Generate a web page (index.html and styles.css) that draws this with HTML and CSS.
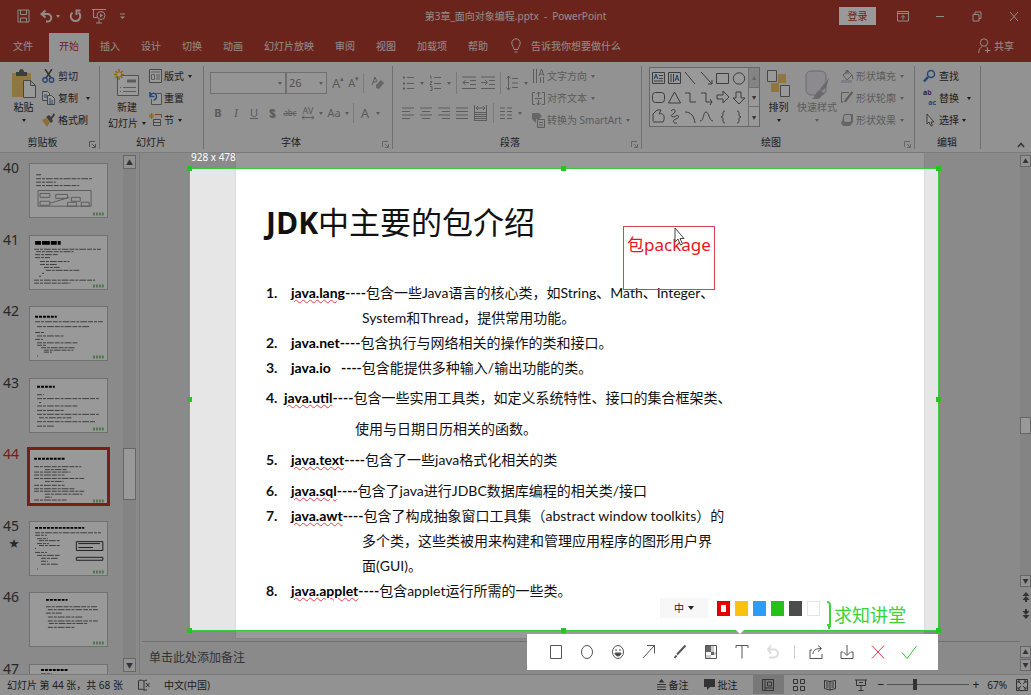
FILE: index.html
```html
<!DOCTYPE html>
<html lang="zh-CN">
<head>
<meta charset="utf-8">
<meta name="viewport" content="width=device-width, initial-scale=1">
<title>第3章_面向对象编程.pptx - PowerPoint</title>
<link rel="stylesheet" href="styles.css">
</head>
<body>
<div class="app">
  <header class="titlebar">
    <div class="quick">
      <button class="tb" aria-label="保存"><svg width="13" height="14" viewBox="0 0 13 14"><path d="M1 1h11v12H1zM3.500 1v4.500h6V1M3.500 13V9h6v4"/></svg></button>
      <button class="tb" aria-label="撤消"><svg width="13" height="14" viewBox="0 0 13 14"><path class="w2" d="M5.500 1.500L1.500 5l4 3.500M2 5h5.500a3.800 3.800 0 0 1 0 7.600H6"/></svg></button>
      <i class="caret"></i>
      <button class="tb" aria-label="重复"><svg width="13" height="14" viewBox="0 0 13 14"><path class="w2" d="M3.500 3.500a4.800 4.800 0 1 0 6 0M11.500 1.500H7.500v4.500"/></svg></button>
      <button class="tb" aria-label="从头开始"><svg width="14" height="16" viewBox="0 0 14 16"><path d="M0 1.500h14M1.500 2v7.500H5M7 12v3M4 15h6"/><circle cx="9" cy="7.500" r="4"/><path class="fl" d="M8 5.500l3 2-3 2z"/></svg></button>
      <button class="tb" aria-label="自定义快速访问工具栏"><svg width="7" height="7" viewBox="0 0 7 7"><path d="M1 1h5"/><path class="fl" d="M1 3.500h5L3.500 6z"/></svg></button>
    </div>
    <h1 class="doc">第3章_面向对象编程.pptx &nbsp;- &nbsp;PowerPoint</h1>
    <div class="wins">
      <button class="login">登录</button>
      <button class="tb" aria-label="功能区显示选项"><svg width="12" height="11" viewBox="0 0 12 11"><path d="M.5.500h11v9.500H.5zM1 2.500h10M6 8.500V4.500M4 6.500l2-2 2 2"/></svg></button>
      <button class="tb" aria-label="最小化"><svg width="12" height="11" viewBox="0 0 12 11"><path d="M2 5.500h8"/></svg></button>
      <button class="tb" aria-label="还原"><svg width="12" height="11" viewBox="0 0 12 11"><path d="M2 3.500h6v6.500H2zM4 3.500V1h6v6.500H8"/></svg></button>
      <button class="tb" aria-label="关闭"><svg width="12" height="11" viewBox="0 0 12 11"><path d="M2 1l8 9M10 1l-8 9"/></svg></button>
    </div>
  </header>

  <nav class="tabs">
    <button class="tab file">文件</button>
    <button class="tab active">开始</button>
    <button class="tab">插入</button>
    <button class="tab">设计</button>
    <button class="tab">切换</button>
    <button class="tab">动画</button>
    <button class="tab">幻灯片放映</button>
    <button class="tab">审阅</button>
    <button class="tab">视图</button>
    <button class="tab">加载项</button>
    <button class="tab">帮助</button>
    <button class="tab tell"><svg width="10" height="16" viewBox="0 0 10 16"><path d="M3 11.500C3 9 .8 8 .8 5a4.200 4.200 0 0 1 8.400 0C9.200 8 7 9 7 11.500zM3.500 14h3"/></svg>告诉我你想要做什么</button>
    <button class="tab share"><svg width="13" height="16" viewBox="0 0 13 16"><circle cx="6" cy="4.500" r="3.700"/><path d="M.7 15c0-3.500 1.500-5.500 3.500-6.500M8 8.500l1 1M9.500 9.500v5.500M7 12.500h5.500"/></svg>共享</button>
  </nav>

  <section class="ribbon">
    <div class="group clip">
      <div class="gbody">
        <button class="big"><svg width="25" height="30" viewBox="0 0 25 30"><path fill="#f2c76a" d="M1 4h19v24H1z"/><path fill="#666" d="M5 3h3c0-4 5-4 5 0h3v4H5z"/><path fill="#fff" stroke="#777" d="M12.500 11.500h7l5 5v12h-12zM19.500 11.500v5h5"/></svg>粘贴<i class="caret"></i></button>
        <div class="col">
          <button class="cmd"><svg width="13" height="14" viewBox="0 0 13 14"><path fill="none" stroke="#555" stroke-width="1.500" d="M3 0l6 9M10 0L4 9"/><circle cx="3" cy="11" r="2.200" fill="none" stroke="#3c76c2" stroke-width="1.400"/><circle cx="9.500" cy="11" r="2.200" fill="none" stroke="#3c76c2" stroke-width="1.400"/></svg>剪切</button>
          <button class="cmd copy"><svg width="13" height="14" viewBox="0 0 13 14"><path fill="#fff" stroke="#777" d="M.5.500h5l2 2v7h-7z"/><path fill="#fff" stroke="#777" d="M5.500 4.500h4l3 3v6h-7z"/><path stroke="#3c76c2" d="M2 4h3M2 6h3M7 8h2M7 10h4M7 12h4"/></svg>复制<i class="caret"></i></button>
          <button class="cmd"><svg width="13" height="14" viewBox="0 0 13 14"><path fill="#e8b65a" d="M0 7l4-2 4 4-3 5z"/><path fill="#666" d="M4 4l3-2 2 2 3-4 1 2-3 4 1 2-2 2z"/></svg>格式刷</button>
        </div>
      </div>
      <div class="gfoot"><span>剪贴板</span><svg class="launch" width="7" height="7" viewBox="0 0 7 7"><path d="M.5 6V.500H6M3 3l3 3M6.500 3v3.500H3"/></svg></div>
    </div>

    <div class="group slides">
      <div class="gbody">
        <button class="big wide"><svg width="26" height="30" viewBox="0 0 26 30"><path fill="#fff" stroke="#888" d="M3.500 6.500h21v20h-21z"/><path stroke="#999" stroke-width="3" d="M13 12h9"/><path stroke="#999" d="M6 18.500h1M9 18.500h13M6 22.500h1M9 22.500h13"/><path stroke="#f0a830" stroke-width="1.500" d="M5 0v11M0 5.500h10M1.500 2l7 7M8.500 2l-7 7"/><circle cx="5" cy="5.500" r="2" fill="#fff"/></svg>新建<span>幻灯片<i class="caret"></i></span></button>
        <div class="col">
          <button class="cmd"><svg width="13" height="14" viewBox="0 0 13 14"><path fill="#fff" stroke="#777" d="M.5.500h12v13H.5z"/><path fill="none" stroke="#999" d="M2 3h9M2.500 5.500h3v5h-3zM7 6h4M7 8h4M7 10h4"/></svg>版式<i class="caret"></i></button>
          <button class="cmd"><svg width="13" height="14" viewBox="0 0 13 14"><path fill="#fff" stroke="#888" d="M4.500 2.500h8v11h-10V8"/><path fill="none" stroke="#3c76c2" stroke-width="1.500" d="M1 1v4.500h4.500M1 5c2-4 6-3 6.500 0s-2 4-3 4"/></svg>重置</button>
          <button class="cmd"><svg width="13" height="14" viewBox="0 0 13 14"><path stroke="#f0a830" d="M0 3h5M2.500 0v6M.5 1l4 4M4.500 1l-4 4"/><path fill="none" stroke="#d96f3a" d="M6 1.500h6.500v3"/><path fill="#fff" stroke="#777" d="M4.500 6.500h7v6h-7zM4 9.500h8"/></svg>节<i class="caret"></i></button>
        </div>
      </div>
      <div class="gfoot"><span>幻灯片</span></div>
    </div>

    <div class="group font off">
      <div class="gbody rows">
        <div class="row fr">
          <span class="pick face"><select aria-label="字体"><option></option></select><i class="caret"></i></span><span class="pick size"><select aria-label="字号"><option>26</option></select><i class="caret"></i></span>
          <button class="ic" aria-label="增大字号"><span class="g">A</span><sup>▴</sup></button>
          <button class="ic" aria-label="减小字号"><span class="g s">A</span><sup>▾</sup></button>
          <i class="bar"></i>
          <button class="ic" aria-label="清除格式"><svg width="13" height="14" viewBox="0 0 13 14"><path fill="none" d="M1 9l3-8 2 5M2 6h3"/><path fill="#aaa" stroke="none" d="M5 9l5-5 3 3-5 6-3-1z"/></svg></button>
        </div>
        <div class="row fmt">
          <button class="ic"><b>B</b></button><button class="ic"><em>I</em></button><button class="ic"><u>U</u></button><button class="ic"><b class="sh">S</b></button><button class="ic"><s>abc</s></button>
          <button class="ic av">AV<svg width="12" height="5" viewBox="0 0 12 5"><path fill="none" d="M0 2.500h12M2 .5l-2 2 2 2M10 .5l2 2-2 2"/></svg></button><i class="caret"></i>
          <button class="ic">Aa</button><i class="caret"></i><i class="bar"></i>
          <button class="ic big-a">A</button><i class="caret"></i>
        </div>
      </div>
      <div class="gfoot"><span>字体</span><svg class="launch" width="7" height="7" viewBox="0 0 7 7"><path d="M.5 6V.500H6M3 3l3 3M6.500 3v3.500H3"/></svg></div>
    </div>

    <div class="group para off">
      <div class="gbody">
        <div class="rows">
          <div class="row pr">
            <button class="ic" aria-label="项目符号"><svg width="13" height="16" viewBox="0 0 13 16"><path d="M5 2.500h7M5 8.500h7M5 13.500h7"/><path stroke-width="2" d="M1 2.500h2M1 8.500h2M1 13.500h2"/></svg></button><i class="caret"></i>
            <button class="ic" aria-label="编号"><svg width="13" height="16" viewBox="0 0 13 16"><path fill="none" d="M5 2.500h7M5 8.500h7M5 13.500h7M1 1h1v3M1 6.500h2L1 9.500h2M1 11.500h2v4H1"/></svg></button><i class="caret"></i><i class="bar"></i>
            <button class="ic" aria-label="减少缩进"><svg width="14" height="14" viewBox="0 0 14 14"><path fill="none" d="M0 1h14M8 4.500h6M8 8.500h6M0 12.500h14M7 6.500H1M3.500 4L1 6.500 3.500 9"/></svg></button>
            <button class="ic" aria-label="增加缩进"><svg width="14" height="14" viewBox="0 0 14 14"><path fill="none" d="M0 1h14M8 4.500h6M8 8.500h6M0 12.500h14M0 6.500h6M4 4l2.500 2.500L4 9"/></svg></button><i class="bar"></i>
            <button class="ic" aria-label="行距"><svg width="13" height="16" viewBox="0 0 13 16"><path fill="none" d="M6 3.500h6M6 8h6M6 12.500h6M2.500 1v14M.5 3.500l2-2.500 2 2.500M.5 12.500l2 2.500 2-2.500"/></svg></button><i class="caret"></i>
          </div>
          <div class="row pr2">
            <button class="ic" aria-label="左对齐"><svg width="12" height="12" viewBox="0 0 12 12"><path d="M0 1h12M0 4.500h8M0 8h12M0 11.500h8"/></svg></button>
            <button class="ic" aria-label="居中"><svg width="12" height="12" viewBox="0 0 12 12"><path d="M0 1h12M2 4.500h8M0 8h12M2 11.500h8"/></svg></button>
            <button class="ic" aria-label="右对齐"><svg width="12" height="12" viewBox="0 0 12 12"><path d="M0 1h12M4 4.500h8M0 8h12M4 11.500h8"/></svg></button>
            <button class="ic" aria-label="两端对齐"><svg width="12" height="12" viewBox="0 0 12 12"><path d="M0 1h12M0 4.500h12M0 8h12M0 11.500h12"/></svg></button>
            <button class="ic" aria-label="分散对齐"><svg width="13" height="16" viewBox="0 0 13 16"><path fill="none" d="M.5 0v16M12.500 0v16M2 3h9M4 1L2 3l2 2M9 1l2 2-2 2M1 7.500h11M1 9.500h11M1 11.500h11M1 13.500h11M1 15.500h11"/></svg></button><i class="bar"></i>
            <button class="ic" aria-label="分栏"><svg width="12" height="12" viewBox="0 0 12 12"><path d="M0 1h5M7 1h5M0 4.500h5M7 4.500h5M0 8h5M7 8h5M0 11.500h5M7 11.500h5"/></svg></button><i class="caret"></i>
          </div>
        </div>
        <div class="col">
          <button class="cmd"><svg width="13" height="15" viewBox="0 0 13 15"><path fill="none" d="M1.500 0v14M4.500 0v14M8.500 8v6M11.500 8v6M7 7l2.500-7L12 7M8 5h3"/></svg>文字方向<i class="caret"></i></button>
          <button class="cmd"><svg width="13" height="15" viewBox="0 0 13 15"><path fill="none" d="M3 1.500H.5v12H3M10 1.500h2.500v12H10M6.500 1v5M4.500 3l2-2 2 2M6.500 9v5M4.500 12l2 2 2-2M3 7.500h7"/></svg>对齐文本<i class="caret"></i></button>
          <button class="cmd"><svg width="13" height="15" viewBox="0 0 13 15"><path fill="#aaa" stroke="none" d="M0 0h7l3 3-3 3H4v4L0 6z"/><path fill="#f3f3f3" d="M5.500 6.500h7v8h-7zM7 9.500h4M7 12h4"/></svg>转换为 SmartArt<i class="caret"></i></button>
        </div>
      </div>
      <div class="gfoot"><span>段落</span><svg class="launch" width="7" height="7" viewBox="0 0 7 7"><path d="M.5 6V.500H6M3 3l3 3M6.500 3v3.500H3"/></svg></div>
    </div>

    <div class="group draw off">
      <div class="gbody">
        <div class="gallery">
          <svg class="shapes" width="98" height="58" viewBox="0 0 98 58">
            <path d="M2.500 4.500h12v11h-12zM9 7.500h4M9 10.500h4M4 13h9M18.500 4.500h12v11h-12zM21 6v8M23.500 6v8M35 4l10 12M51 4l11 12M62 12v4h-4M66.500 5.500h12v10h-12z"/>
            <path class="bl" d="M4 11l2-5 2 5M5 9h2M25 13l2-6 2 6M26 11h2"/>
            <circle cx="89" cy="10.500" r="5.700"/>
            <rect x="2.500" y="24.500" width="12" height="10" rx="3"/>
            <path d="M18.500 35l6-11 6 11zM35 25h5v9h6M51 25h5v9h6M60 31l2 3-2 3M67 27h6v-4l6 6-6 6v-4h-6zM86 24h5v6h4l-6 6-6-6h3zM3 53v-7l4-4h4l-2 4c4-2 7 3 4 8H3M21 43c4-4 6 1 2 3s0 4 3 2 4 2 0 3-3 5 1 4M35 44c6 0 9 4 10 11M50 53c4 0 3-9 6-9s3 9 7 9M75 43c-2 0-2 1-2 3s0 2-2 3c2 0 2 1 2 3s0 3 2 3M87 43c2 0 2 1 2 3s0 2 2 3c-2 0-2 1-2 3s0 3-2 3"/>
          </svg>
          <div class="gscroll"><span class="dis">▴</span><span>▾</span><span>▾</span></div>
        </div>
        <button class="big on"><svg width="23" height="30" viewBox="0 0 23 30"><path fill="#f2c76a" d="M4 14h8v9H4zM11 5h8v9h-8z"/><path fill="#fff" stroke="#777" d="M.5 1.500h9v11h-9zM13.500 16.500h9v11h-9z"/></svg>排列<i class="caret"></i></button>
        <button class="big qs"><svg width="24" height="30" viewBox="0 0 24 30"><rect x="1" y="2" width="20" height="24" rx="5" fill="#e9e4ee" stroke="#b9b0c0"/><path fill="#b5b0b8" d="M24 9l-3 10-5 3-1-2zM15 21l4 3-4 5c-3 2-6 1-8 1 3-2 4-8 8-9z"/></svg>快速样式<i class="caret"></i></button>
        <div class="col">
          <button class="cmd"><svg width="13" height="14" viewBox="0 0 13 14"><path fill="none" d="M2 6l5-4 4 4-5 5zM5 5V1.500h2V5M11 6l1 4"/><path fill="#d8d0dc" stroke="none" d="M0 11h11v3H0z"/></svg>形状填充<i class="caret"></i></button>
          <button class="cmd"><svg width="13" height="14" viewBox="0 0 13 14"><path fill="none" d="M8 1.500H.5v10l2-1"/><path stroke-width="2" d="M11.500 1L5 9l-1 2"/></svg>形状轮廓<i class="caret"></i></button>
          <button class="cmd"><svg width="13" height="14" viewBox="0 0 13 14"><path fill="#aaa" stroke="none" d="M4 1h8v8l-3 4H2L0 10z"/><rect x="2.500" y="1.500" width="8" height="8" rx="2" fill="#eee"/></svg>形状效果<i class="caret"></i></button>
        </div>
      </div>
      <div class="gfoot"><span>绘图</span><svg class="launch" width="7" height="7" viewBox="0 0 7 7"><path d="M.5 6V.500H6M3 3l3 3M6.500 3v3.500H3"/></svg></div>
    </div>

    <div class="group edit">
      <div class="gbody">
        <div class="col">
          <button class="cmd"><svg width="13" height="14" viewBox="0 0 13 14"><circle cx="8" cy="5" r="3.500" fill="none" stroke="#3c76c2" stroke-width="1.500"/><path stroke="#3c76c2" stroke-width="2.500" d="M5 8l-4 4.500"/></svg>查找</button>
          <button class="cmd rep"><span class="abac"><span>a<i>b</i></span><span class="ac">ac</span></span>替换<i class="caret"></i></button>
          <button class="cmd"><svg width="13" height="14" viewBox="0 0 13 14"><path fill="#fff" stroke="#666" d="M4 1v10l2-2 2 4 1.500-.5L8 9h3z"/></svg>选择<i class="caret"></i></button>
        </div>
      </div>
      <div class="gfoot"><span>编辑</span></div>
    </div>
    <button class="collapse" aria-label="折叠功能区"><svg width="8" height="6" viewBox="0 0 8 6"><path fill="none" stroke="#555" stroke-width="1.500" d="M1 5l3-3.500L7 5"/></svg></button>
  </section>

  <main class="work">
    <aside class="panel">
      <ol class="thumbs">
        <li><span class="no">40</span><svg class="thumb" viewBox="0 0 78 54"><path class="k" d="M6 11h6M6 15h57M6 18.500h20M6 22h44"/><path class="box" d="M8 27h54v16H8zM10 30h10v4H10zM10 38h10v4H10zM26 31h12v4H26zM42 34h9v4h-9zM38 39h9v4h-9zM52 39h8v4h-8zM20 40l20-6"/><path class="gr" d="M64 51h11"/></svg></li>
        <li><span class="no">41</span><svg class="thumb" viewBox="0 0 78 54"><path class="hd" d="M5 7h26"/><path class="k" d="M4 13.500h68M6 16h38M5 19h24M5 22h15M10 26h30M10 29h17M14 32h16M16 35h34M12 38h2M9 41h2M4 45h62M4 48h37"/><path class="gr" d="M64 51h11"/></svg></li>
        <li><span class="no">42</span><svg class="thumb" viewBox="0 0 78 54"><path class="hd th" d="M5 10h22"/><path class="k" d="M5 15h69M7 20h54M5 26h9M7 29.500h28M5 33h8M7 36.500h41M7 39h10M11 41.500h34M14 44h30M14 46h8M7 50h1"/><path class="gr" d="M64 51h11"/></svg></li>
        <li><span class="no">43</span><svg class="thumb" viewBox="0 0 78 54"><path class="hd th" d="M7 8h18"/><path class="k" d="M7 16h7M7 20h64M9 24h2M7 27.500h41M7 32h27M7 36h64M9 39.500h33M7 43.500h60M7 48h17"/><path class="gr" d="M64 51h11"/></svg></li>
        <li class="cur"><span class="no">44</span><svg class="thumb" viewBox="0 0 78 54"><path class="hd th" d="M4 9h31"/><path class="k" d="M4 17h48M15 20h22M4 22.500h37M4 25.500h31M4 29h51M15 32h19M4 36h31M4 39.500h41M4 42h51M15 45h38M15 48h7M4 51h33"/><path class="gr" d="M64 52h11"/></svg></li>
        <li class="star"><span class="no">45<small>★</small></span><svg class="thumb" viewBox="0 0 78 54"><path class="hd th" d="M5 6h50"/><path class="k" d="M5 11h67M5 13.500h12M7 17h11M9 19h21M7 22h12M9 24h21M5 27h1M5 31h12M7 34h24M11 37h18M11 40h7M11 43h17M7 48h1"/><path class="box dk" d="M47 20h27v9H47zM47 36h27v3H47zM49 22h22M49 26h15"/><path class="gr" d="M64 51h11"/></svg></li>
        <li><span class="no">46</span><svg class="thumb" viewBox="0 0 78 54"><path class="hd th" d="M16 7h22"/><path class="k" d="M16 14h52M18 17h51M16 20.500h16M18 24.500h35M18 28.500h51M19 31h39M18 35h28"/><path class="gr" d="M64 51h11"/></svg></li>
        <li><span class="no">47</span><svg class="thumb" viewBox="0 0 78 54"><path class="hd th" d="M11 5h27"/><path class="k" d="M11 9h11"/></svg></li>
      </ol>
      <div class="vbar"><button aria-label="向上滚动">▲</button><span class="knob"></span><button aria-label="向下滚动">▼</button></div>
    </aside>

    <div class="center">
      <div class="canvas">
        <article class="slide">
          <h2><b>JDK</b>中主要的包介绍</h2>
          <ol class="pkgs">
            <li><span class="n">1.</span><div><p><b><u>java.lang</u>----</b>包含一些Java语言的核心类，如String、Math、Integer、</p><p class="in">System和Thread，提供常用功能。</p></div></li>
            <li><span class="n">2.</span><div><p><b>java.net----</b>包含执行与网络相关的操作的类和接口。</p></div></li>
            <li><span class="n">3.</span><div><p><b>java.io &nbsp;&nbsp;----</b>包含能提供多种输入/输出功能的类。</p></div></li>
            <li class="loose near"><span class="n">4.</span><div><p><b><u>java.util</u>----</b>包含一些实用工具类，如定义系统特性、接口的集合框架类、</p><p class="in">使用与日期日历相关的函数。</p></div></li>
            <li class="loose"><span class="n">5.</span><div><p><b><u>java.text</u>----</b>包含了一些java格式化相关的类</p></div></li>
            <li class="gap"><span class="n">6.</span><div><p><b><u>java.sql</u>----</b>包含了java进行JDBC数据库编程的相关类/接口</p></div></li>
            <li><span class="n">7.</span><div><p><b><u>java.awt</u>----</b>包含了构成抽象窗口工具集（abstract window toolkits）的</p><p class="in">多个类，这些类被用来构建和管理应用程序的图形用户界</p><p class="in">面(GUI)。</p></div></li>
            <li><span class="n">8.</span><div><p><b><u>java.applet</u>----</b>包含applet运行所需的一些类。</p></div></li>
          </ol>
          <div class="mark"><svg width="26" height="28" viewBox="0 0 26 28"><path fill="none" stroke="#37d337" stroke-width="2" d="M19 1c3 0 3 2 3 5v20M1 28v-4h8l3 2 3-2h6v4"/></svg><span>求知讲堂</span></div>

          <div class="shot">
            <span class="dims">928 x 478</span>
            <div class="note">包package</div>
            <svg class="cursor" width="11" height="20" viewBox="0 0 11 20"><path fill="#fff" stroke="#444" d="M1 1v14l3-3 2.500 6 2-1L6 11.500h4z"/></svg>
            <div class="opts">
              <button class="lang">中 <i class="caret"></i></button>
              <button class="sw red" aria-label="红色"></button><button class="sw yellow" aria-label="黄色"></button><button class="sw blue" aria-label="蓝色"></button><button class="sw green" aria-label="绿色"></button><button class="sw gray" aria-label="灰色"></button><button class="sw white" aria-label="白色"></button>
            </div>
            <i class="h tl"></i><i class="h tc"></i><i class="h tr"></i><i class="h ml"></i><i class="h mr"></i><i class="h bl"></i><i class="h bc"></i><i class="h br"></i>
            <div class="tools">
              <button aria-label="矩形"><svg width="16" height="16" viewBox="0 0 16 16"><path d="M2.500 1.500h11v13h-11z"/></svg></button>
              <button aria-label="椭圆"><svg width="16" height="16" viewBox="0 0 16 16"><ellipse cx="8" cy="8" rx="5.500" ry="6.500"/></svg></button>
              <button aria-label="表情"><svg width="16" height="16" viewBox="0 0 16 16"><ellipse cx="8" cy="8" rx="5.500" ry="6.500"/><path fill="#444" d="M5 9h6c0 4-6 4-6 0zM6 5v2M10 5v2"/></svg></button>
              <button aria-label="箭头"><svg width="16" height="16" viewBox="0 0 16 16"><path d="M2 14L13.500 1.500M6 1.500h7.500v8"/></svg></button>
              <button aria-label="画笔"><svg width="16" height="16" viewBox="0 0 16 16"><path class="p2" d="M5 10.500L13.500 1.500"/><path class="p2" d="M2.500 14l2-2.500"/></svg></button>
              <button aria-label="马赛克"><svg width="16" height="16" viewBox="0 0 16 16"><path d="M2.500 1.500h11v13h-11z"/><path fill="#666" stroke="none" d="M3 2h5v6H3zM8 8h3v3H8z"/><path fill="#ccc" stroke="none" d="M8 2h3v6H8zM11 8h2v3h-2zM3 11h5v3H3z"/></svg></button>
              <button aria-label="文字"><svg width="16" height="16" viewBox="0 0 16 16"><path d="M2 4V1.500h12V4M8 1.500v13"/></svg></button>
              <button class="dim" aria-label="撤销"><svg width="16" height="16" viewBox="0 0 16 16"><path class="p2" d="M6 1.500l-3 4 3 4M3.500 5.500H9a4 4 0 0 1 0 8H4"/></svg></button>
              <i class="tsep"></i>
              <button aria-label="分享"><svg width="16" height="16" viewBox="0 0 16 16"><path d="M4 6H2v8.500h12V10M5 10c0-4 3-5.500 8-5.500M10 1.500l3.500 3-3.500 3"/></svg></button>
              <button aria-label="保存"><svg width="16" height="16" viewBox="0 0 16 16"><path d="M4 8H2v6.500h12V8h-2M8 1v10M4.500 8L8 11.500 11.500 8"/></svg></button>
              <button class="no-btn" aria-label="取消"><svg width="16" height="16" viewBox="0 0 16 16"><path d="M2 1.500l12 13M14 1.500l-12 13"/></svg></button>
              <button class="ok-btn" aria-label="完成"><svg width="16" height="16" viewBox="0 0 16 16"><path d="M1 8.500l5 6L15.500 2"/></svg></button>
            </div>
          </div>
        </article>
      </div>
      <div class="notes">单击此处添加备注</div>
    </div>

    <div class="right">
      <div class="vbar main-bar"><button aria-label="向上">▲</button><span class="knob"></span><button aria-label="向下">▼</button></div>
      <button class="dbl" aria-label="上一张幻灯片"><svg width="8" height="10" viewBox="0 0 8 10"><path fill="#555" d="M4 0l3.500 4h-7zM4 4l3.500 4H5v2H3V8H.5z"/></svg></button>
      <button class="dbl" aria-label="下一张幻灯片"><svg width="8" height="10" viewBox="0 0 8 10"><path fill="#555" d="M4 10L.5 6h7zM4 6L.5 2H3V0h2v2h2.500z"/></svg></button>
      <div class="vbar note-bar"><button aria-label="备注向上">▲</button><button aria-label="备注向下">▼</button></div>
    </div>
  </main>

  <footer class="status">
    <span>幻灯片 第 44 张，共 68 张</span>
    <svg class="proof" width="12" height="12" viewBox="0 0 12 12"><path d="M6 2C4 1 2 1 .5 1.500v9C2 10 4 10 6 11zM6 2c1-.6 2-.8 3-.8M6 11h3M8 4l3.500 4M11.500 4L8 8"/></svg>
    <span class="lg">中文(中国)</span>
    <button class="sb push"><svg width="9" height="11" viewBox="0 0 9 11"><path fill="#555" stroke="none" d="M4.500 0l3 3.500h-6z"/><path d="M0 5.500h9M0 8h9M0 10.500h9"/></svg>备注</button>
    <button class="sb cm"><svg width="11" height="11" viewBox="0 0 11 11"><path fill="#555" stroke="none" d="M0 0h11v8H6l-3 3V8H0z"/></svg>批注</button>
    <button class="vw act" aria-label="普通视图"><svg width="12" height="12" viewBox="0 0 12 12"><path d="M.5.500h11v11H.5zM3 .5v11M5.500 3h4v4h-4zM3 9h8"/></svg></button>
    <button class="vw" aria-label="幻灯片浏览"><svg width="12" height="12" viewBox="0 0 12 12"><path d="M.5.500h4v4h-4zM7.500.5h4v4h-4zM.5 7.500h4v4h-4zM7.500 7.500h4v4h-4z"/></svg></button>
    <button class="vw" aria-label="阅读视图"><svg width="12" height="12" viewBox="0 0 12 12"><path d="M.5 1.500L6 2.500l5.500-1v8L6 11 .5 9.500zM6 2v9M2 4h2.500M2 6h2.500M2 8h2.500M7.500 4H10M7.500 6H10M7.500 8H10"/></svg></button>
    <button class="vw" aria-label="幻灯片放映"><svg width="12" height="12" viewBox="0 0 12 12"><path d="M0 1h12M1.500 1v5.500h9V1M6 6.500v5M3.500 11.500h5M4 3.500h4"/></svg></button>
    <div class="zoom"><button aria-label="缩小">−</button><input type="range" min="10" max="200" value="72" aria-label="缩放"><button aria-label="放大">+</button></div>
    <span class="pct">67%</span>
    <button class="fit" aria-label="适应窗口"><svg width="12" height="12" viewBox="0 0 12 12"><path d="M.5.500h11v11H.5zM2 4V2h2M8 2h2v2M10 8v2H8M4 10H2V8M2 2l3 3M10 2L7 5M10 10L7 7M2 10l3-3"/></svg></button>
  </footer>
</div>
</body>
</html>
```

FILE: styles.css
```css
* { box-sizing: border-box; }
html, body { height: 100%; margin: 0; }
body {
  overflow: hidden;
  font: 10px/14px "Noto Sans", "Noto Sans CJK SC", sans-serif;
  color: #333;
}
button {
  margin: 0; padding: 0; border: 0; background: none;
  font: inherit; color: inherit; white-space: nowrap;
}
h1, h2, p, ol { margin: 0; padding: 0; font-weight: 400; }
ol { list-style: none; }
svg { display: block; flex: none; }
.app { display: flex; flex-direction: column; height: 100vh; background: #f3f3f3; }

.caret {
  flex: none; width: 0; height: 0;
  border: 2px solid transparent; border-top: 3px solid currentColor; border-bottom: 0;
}

/* Title bar */
.titlebar {
  display: grid; grid-template-columns: 1fr auto 1fr; align-items: center;
  height: 32px; background: #b23d2e; color: #f6e8e5;
}
.titlebar svg, .tabs svg { fill: none; stroke: currentColor; }
.titlebar .fl { fill: currentColor; stroke: none; }
.titlebar .w2 { stroke-width: 2; }
.quick { display: flex; align-items: center; padding-left: 17px; }
.quick .tb { margin-right: 10px; }
.quick .tb:nth-child(2) { margin-right: 3px; }
.quick .caret { margin-right: 9px; }
.quick .tb:last-child { margin-left: 3px; }
.doc { font-size: 10px; line-height: 14px; }
.wins { display: flex; align-items: center; justify-content: flex-end; padding-right: 11px; gap: 25px; }
.login { width: 37px; height: 18px; margin-right: -4px; background: #fff; color: #b23d2e; }

/* Tabs */
.tabs { display: flex; height: 30px; background: #b23d2e; color: #f6e8e5; }
.tab { display: flex; align-items: center; padding: 0 10px 2px 11px; }
.tab.file { padding: 0 16px 2px 13px; }
.tab.active { padding: 0 10px 3px; margin-top: 1px; background: #f3f3f3; color: #b23d2e; }
.tab.tell { gap: 10px; padding-left: 13px; }
.tab.share { gap: 3px; margin-left: auto; padding-right: 17px; }

/* Ribbon */
.ribbon {
  display: flex; height: 91px; padding: 4px 0 0;
  border-bottom: 1px solid #cfcfcf; background: #f3f3f3;
}
.group { display: flex; flex: none; flex-direction: column; position: relative; height: 83px; border-right: 1px solid #bbb; }
.clip { width: 100px; }
.slides { width: 104px; }
.font { width: 189px; }
.para { width: 249px; }
.draw { width: 273px; }
.edit { width: 66px; }
.gbody { display: flex; flex: 1; }
.gfoot { display: flex; justify-content: center; align-items: center; height: 15px; padding-right: 14px; color: #333; }
.slides .gfoot, .edit .gfoot { padding-right: 1px; }
.launch { position: absolute; right: 3px; bottom: 1px; fill: none; stroke: #888; }
.off { color: #999; }
.off svg { stroke: #999; }
.off .launch { stroke: #aaa; }
.big { display: flex; flex-direction: column; align-items: center; gap: 1px; margin-left: 11px; padding-top: 3px; height: 64px; line-height: 14px; }
.big .caret { margin-top: 4px; }
.big span { display: flex; align-items: center; gap: 4px; }
.big span .caret { margin-top: 0; }
.big svg { stroke: none; }
.wide { margin-left: 8px; line-height: 15px; }
.col { display: flex; flex-direction: column; gap: 8px; margin-left: 6px; padding-top: 3px; }
.slides .col { margin-left: 3px; }
.slides .cmd { gap: 2px; }
.cmd { display: flex; align-items: center; gap: 3px; height: 14px; }
.slides .cmd .caret { margin-left: 2px; }
.cmd.copy .caret, .cmd.rep .caret { margin-left: 5px; }
.rows { display: flex; flex-direction: column; }
.row { display: flex; align-items: center; height: 30px; }
.fr { margin-top: 2px; padding-left: 6px; }
.pick { display: flex; align-items: center; height: 22px; border: 1px solid #bbb; background: #f8f8f8; padding-right: 3px; }
.pick select { flex: 1; min-width: 0; appearance: none; border: 0; padding: 0 2px; background: none; color: #888; font: 11px/18px "Noto Sans", sans-serif; }
.face { width: 76px; }
.size { width: 41px; margin-right: 5px; }
.ic { display: flex; align-items: center; }
.ic .g { font-size: 13px; }
.ic .s { font-size: 11px; }
.ic sup { font-size: 7px; line-height: 14px; align-self: flex-start; margin-top: -4px; }
.bar { width: 1px; height: 20px; background: #ccc; }
.fr .ic { margin-right: 4px; }
.fr .bar { margin-right: 7px; }
.fmt { padding-left: 7px; gap: 4px; font-size: 11px; }
.fmt .ic { justify-content: center; min-width: 14px; }
.fmt .ic em { font-family: "Liberation Serif", serif; font-size: 12px; }
.sh { text-shadow: 1px 1px 1px #999; }
.fmt s { font-size: 8px; }
.av { flex-direction: column; font-size: 9px; line-height: 9px; }
.big-a { font-size: 13px; }
.pr { margin-top: 2px; padding-left: 9px; gap: 5px; }
.pr2 { padding-left: 9px; gap: 6px; }
.pr .bar { height: 22px; }
.para .col { margin-left: 4px; }
.para .cmd { gap: 2px; }
.para .cmd .caret { margin-left: 2px; }
.gallery { display: flex; width: 111px; height: 60px; margin: 1px 0 0 7px; border: 1px solid #aaa; background: #fff; }
.shapes { flex: none; fill: none; stroke: #666; }
.off .shapes { stroke: #666; }
.shapes .bl { stroke: #3c76c2; }
.gscroll { display: flex; flex: 1; flex-direction: column; border-left: 1px solid #bbb; color: #555; }
.gscroll span { display: flex; align-items: center; justify-content: center; flex: 1; border-bottom: 1px solid #bbb; font-size: 8px; }
.gscroll .dis { background: #ddd; color: #aaa; }
.gscroll span:last-child { border-bottom: 0; }
.off .on { color: #333; margin-left: 7px; }
.qs { margin-left: 7px; }
.draw .col { margin-left: 4px; }
.draw .cmd { gap: 2px; }
.draw .col .caret { margin-left: 2px; }
.edit .col { margin-left: 8px; }
.abac { display: flex; flex-direction: column; width: 13px; font-size: 7px; font-weight: 700; line-height: 10px; text-align: left; color: #444; }
.abac i { font-style: normal; color: #8b3fb5; }
.abac .ac { align-self: flex-end; color: #3c76c2; }
.collapse { margin: auto 6px 4px auto; }

/* Work area */
.work { display: flex; flex: 1; min-height: 0; background: #e6e6e6; }
.panel { display: flex; flex: none; width: 140px; padding: 2px 3px 2px 0; border-right: 1px solid #ccc; overflow: hidden; }
.thumbs { flex: 1; height: 0; padding-top: 6px; }
.thumbs li { display: flex; height: 71px; }
.thumbs li:nth-child(odd) { height: 72px; }
.no { width: 29px; padding-left: 3px; font-size: 14px; line-height: 14px; color: #444; }
.no small { display: block; padding-left: 6px; font-size: 10px; line-height: 20px; }
.thumb { width: 79px; height: 55px; margin-top: 2px; border: 1px solid #bbb; background: #fff; fill: none; }
.thumb .k { stroke: #333; stroke-width: 1; stroke-dasharray: 5 1 3 1 7 1; opacity: .75; }
.thumb .hd { stroke: #000; stroke-width: 4; stroke-dasharray: 6 1 8 1; }
.thumb .th { stroke-width: 2; stroke-dasharray: 3 1; }
.thumb .box { stroke: #999; stroke-width: 1; }
.thumb .dk { stroke: #333; }
.thumb .gr { stroke: #4fb04f; stroke-width: 3; stroke-dasharray: 2 1; opacity: .7; }
.cur .no { color: #c43526; }
.cur .thumb { outline: 2px solid #c43526; border-color: #c43526; }
.vbar { display: flex; flex-direction: column; width: 13px; background: #dcdcdc; }
.vbar button { flex: none; height: 14px; border: 1px solid #aaa; background: #f3f3f3; font-size: 7px; line-height: 11px; color: #555; }
.vbar .knob { border: 1px solid #aaa; background: #fff; }
.panel .knob { flex: 0 0 52px; margin: 279px 0 auto; }
.center { display: flex; flex: 1; flex-direction: column; min-width: 0; }
.canvas { display: flex; justify-content: center; flex: 1; min-height: 0; padding: 0 96px 3px; }
.notes { flex: none; height: 33px; margin-left: 2px; padding: 7px; border-top: 1px solid #bbb; font-size: 12px; line-height: 18px; color: #555; }
.right { display: flex; flex-direction: column; width: 11px; padding-top: 2px; }
.right .vbar { width: 11px; }
.right .main-bar { height: 432px; }
.right button { font-size: 6px; }
.right .vbar button { height: 12px; line-height: 9px; }
.main-bar .knob { flex: 0 0 17px; margin: 250px 0 auto; }
.dbl { padding: 5px 0 2px 2px; }
.note-bar { margin-top: auto; margin-bottom: 3px; gap: 1px; }

/* Slide */
.slide {
  position: relative; flex: 1; min-width: 0; padding: 48px 20px 0 30px;
  background: #fff; box-shadow: 0 0 1px #aaa; color: #111;
  font: 14px/25px Lato, "Noto Sans CJK SC", sans-serif;
}
.slide h2 { margin-bottom: 37px; font: 31px/40px "Noto Sans CJK SC", sans-serif; white-space: nowrap; }
.slide h2 b { font-family: "Open Sans", sans-serif; font-size: 30px; }
.pkgs li { display: flex; white-space: nowrap; }
.pkgs .n { width: 25px; font-weight: 700; }
.pkgs b { font-weight: 700; color: #000; }
.pkgs u { text-decoration: underline wavy #e0404c 1px; text-underline-offset: 1px; }
.pkgs .in { padding-left: 71px; }
.loose { line-height: 31px; }
.pkgs .near { margin-top: 2px; }
.near .n { width: 18px; }
.gap { margin-top: 3px; }
.mark { position: absolute; right: 18px; bottom: 9px; display: flex; align-items: center; color: #37d337; font-size: 18px; line-height: 28px; }

/* Capture overlay */
.shot {
  position: absolute; z-index: 10; top: 16px; right: -14px; bottom: 8px; left: -46px;
  outline: 1px solid #3cc83c; box-shadow: 0 0 0 200vmax rgba(0, 0, 0, .4);
  font: 10px/14px "Noto Sans", "Noto Sans CJK SC", sans-serif;
}
.dims { position: absolute; top: -19px; left: 1px; color: #fff; }
.h { position: absolute; width: 5px; height: 5px; margin: -3px; background: #26c226; }
.tl { top: 0; left: 0; } .tc { top: 0; left: 50%; } .tr { top: 0; right: 0; }
.ml { top: 50%; left: 0; } .mr { top: 50%; right: 0; }
.h.bl { bottom: 0; left: 0; } .bc { bottom: 0; left: 50%; } .br { bottom: 0; right: 0; }
.note {
  position: absolute; top: 57px; left: 433px; height: 64px; padding: 6px 3px;
  border: 1px solid #d8405a; color: #e8141e; font-size: 17px; line-height: 24px;
}
.cursor { position: absolute; top: 58px; left: 484px; }
.opts {
  position: absolute; right: 111px; bottom: 1px; display: flex; align-items: center; gap: 5px;
  height: 42px; padding: 0 7px; background: #fff;
}
.opts::after { content: ""; position: absolute; bottom: -5px; left: 82px; border: 5px solid transparent; border-top-color: #fff; border-bottom: 0; }
.lang { display: flex; align-items: center; justify-content: center; gap: 4px; width: 48px; height: 20px; margin-right: 4px; background: #f7f7f7; color: #222; }
.lang .caret { border-width: 4px 3px 0; }
.sw { width: 13px; height: 15px; }
.red { border: 4px solid #e00000; background: #fff; }
.yellow { background: #f9c20e; }
.blue { background: #2b9df8; }
.green { background: #26c01c; }
.gray { background: #4c4c4c; }
.white { border: 1px solid #e4e4e4; background: #fff; }
.tools {
  position: absolute; top: calc(100% + 4px); right: 0; display: flex; align-items: center;
  height: 36px; padding: 0 14px 0 13px; background: #fff; color: #555;
}
.tools button { display: flex; justify-content: center; width: 31px; }
.tools svg { fill: none; stroke: currentColor; }
.tools .p2 { stroke-width: 2; }
.tools .dim { color: #ddd; }
.tools .no-btn { color: #e8384f; }
.tools .ok-btn { color: #35c435; }
.tsep { width: 1px; height: 14px; margin: 0 5px 0 6px; background: #ccc; }

/* Status bar */
.status { display: flex; align-items: center; flex: none; height: 21px; padding: 0 3px 1px 7px; border-top: 1px solid #ccc; background: #f3f3f3; color: #333; }
.status svg { fill: none; stroke: #555; }
.proof { margin: 0 14px 0 15px; }
.sb { display: flex; align-items: center; gap: 3px; margin-right: 15px; }
.push { margin-left: auto; }
.vw { display: flex; align-items: center; justify-content: center; width: 31px; height: 19px; }
.act { background: #c8c8c8; }
.zoom { display: flex; align-items: center; margin: 0 8px 0 1px; gap: 3px; }
.zoom button { font-size: 12px; }
.zoom input { appearance: none; width: 82px; height: 12px; margin: 0; background: linear-gradient(#888, #888) center / 100% 1px no-repeat; }
.zoom input::-webkit-slider-thumb { appearance: none; width: 4px; height: 11px; background: #555; }
.pct { margin-right: 9px; }
```
